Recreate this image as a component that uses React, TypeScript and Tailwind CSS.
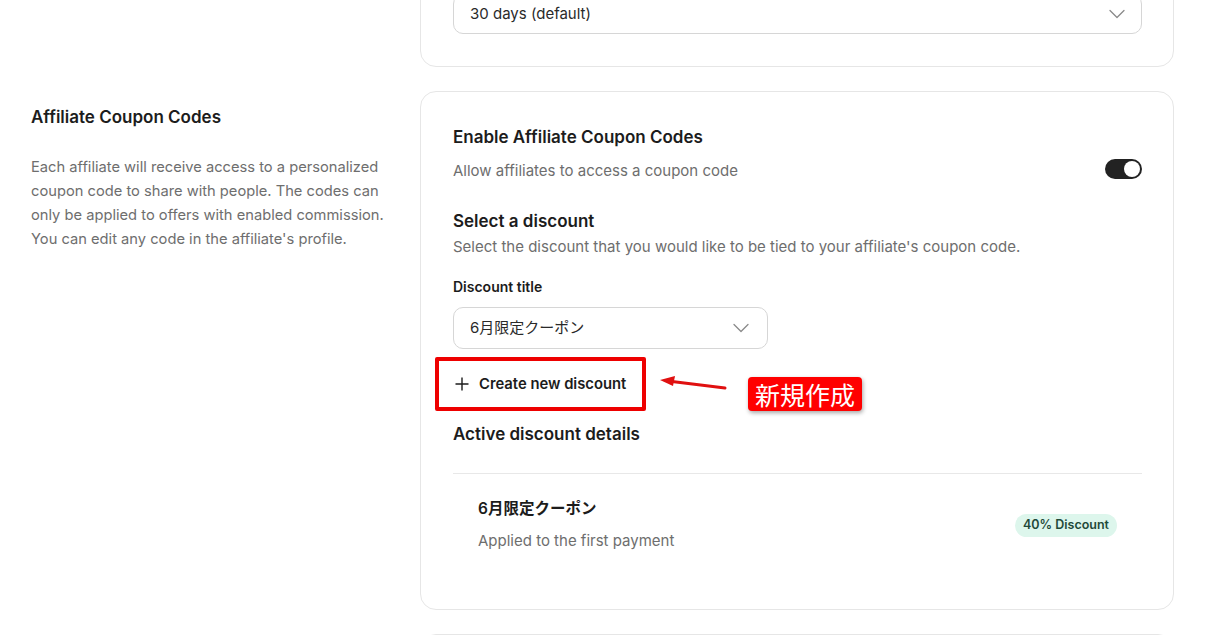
import React from "react";

const font = { fontFamily: 'Inter, "Noto Sans CJK JP", sans-serif' };

function Chevron() {
  return (
    <svg width="16" height="10" viewBox="0 0 16 10" fill="none">
      <path d="M1 1.5 L8 8.5 L15 1.5" stroke="#8a8a8a" strokeWidth="1.3" strokeLinecap="round" strokeLinejoin="round" />
    </svg>
  );
}

export default function App() {
  return (
    <div className="w-[1205px] h-[635px] overflow-hidden bg-white text-[#1c1c1c]" style={font}>
      <div className="flex flex-col px-[31px] mt-[-39px] gap-[24px]">
        {/* Row 1 */}
        <div className="flex">
          <div className="w-[389px] shrink-0" />
          <div className="flex-1 rounded-[16px] border border-[#e6e6e6] pl-[32px] pr-[31px] pt-[32px] pb-[32px]">
            <div className="h-[40px] rounded-[10px] border border-[#d6d6d6] flex items-center justify-between pl-[16px] pr-[16px]">
              <span className="text-[15px] text-[#2a2a2a]">30 days (default)</span>
              <Chevron />
            </div>
          </div>
        </div>

        {/* Row 2 */}
        <div className="flex">
          <div className="w-[389px] shrink-0 pt-[14px] pr-[20px]">
            <div className="text-[17px] leading-[24px] font-semibold text-[#1c1c1c]">Affiliate Coupon Codes</div>
            <p className="mt-[26px] text-[14.7px] leading-[24px] text-[#6e6e6e] w-[365px]">
              Each affiliate will receive access to a personalized coupon code to share with people. The codes can only be applied to offers with enabled commission. You can edit any code in the affiliate's profile.
            </p>
          </div>
          <div className="flex-1 rounded-[16px] border border-[#e6e6e6] pl-[32px] pr-[31px] pt-[33px] pb-[32px]">
            <div className="text-[17px] leading-[24px] font-semibold">Enable Affiliate Coupon Codes</div>
            <div className="mt-[10px] flex items-center justify-between">
              <span className="text-[15px] leading-[24px] text-[#6e6e6e]">Allow affiliates to access a coupon code</span>
              <div className="w-[37px] h-[20px] rounded-full bg-[#222] relative mb-[4px]">
                <div className="absolute right-[2px] top-[2px] w-[16px] h-[16px] rounded-full bg-white" />
              </div>
            </div>

            <div className="mt-[26px] text-[17px] leading-[24px] font-semibold">Select a discount</div>
            <div className="mt-[2px] text-[15px] leading-[24px] text-[#6e6e6e]">
              Select the discount that you would like to be tied to your affiliate's coupon code.
            </div>

            <div className="mt-[18px] text-[14px] leading-[20px] font-semibold">Discount title</div>
            <div className="mt-[10px] w-[315px] h-[42px] rounded-[10px] border border-[#d6d6d6] flex items-center justify-between pl-[16px] pr-[18px]">
              <span className="text-[15px] text-[#2a2a2a]">6月限定クーポン</span>
              <Chevron />
            </div>

            <div className="relative mt-[8px] h-[54px] flex items-center">
              <div className="flex items-center gap-[10px] pl-[2px]">
                <svg width="14" height="14" viewBox="0 0 14 14" fill="none">
                  <path d="M7 0.5 V13.5 M0.5 7 H13.5" stroke="#1c1c1c" strokeWidth="1.4" />
                </svg>
                <span className="text-[14.8px] font-semibold text-[#1c1c1c]">Create new discount</span>
              </div>
              {/* annotation box */}
              <div className="absolute left-[-18px] top-0 w-[211px] h-[54px] border-[4px] border-[#ee0000] rounded-[2px]" />
              {/* arrow */}
              <svg className="absolute left-[205px] top-[18px]" width="70" height="16" viewBox="0 0 70 16" fill="none">
                <path d="M67 13 L14 6.5" stroke="#e01010" strokeWidth="3" strokeLinecap="round" />
                <path d="M2 5 L17 1 L15 11 Z" fill="#e01010" />
              </svg>
              {/* label */}
              <div className="absolute left-[295px] top-[20px] h-[34px] px-[7px] rounded-[4px] bg-[#ff0000] shadow-[1px_2px_4px_rgba(0,0,0,0.35)] flex items-center">
                <span className="text-[25px] leading-[28px] text-white" style={{ fontFamily: '"Noto Sans CJK JP", sans-serif' }}>新規作成</span>
              </div>
            </div>

            <div className="mt-[11px] text-[17px] leading-[24px] font-semibold">Active discount details</div>
            <div className="mt-[27px] border-t border-[#e8e8e8]" />
            <div className="flex items-center justify-between px-[25px] pt-[23px] pb-[24px]">
              <div>
                <div className="text-[15.5px] leading-[24px] font-semibold">6月限定クーポン</div>
                <div className="mt-[8px] text-[15px] leading-[24px] text-[#6e6e6e]">Applied to the first payment</div>
              </div>
              <div className="h-[23px] px-[8px] rounded-full bg-[#ddf6ec] flex items-center">
                <span className="text-[12.5px] font-semibold text-[#1f4a3a]">40% Discount</span>
              </div>
            </div>
          </div>
        </div>

        {/* Row 3 */}
        <div className="flex">
          <div className="w-[389px] shrink-0" />
          <div className="flex-1 h-[120px] rounded-[16px] border border-[#e6e6e6]" />
        </div>
      </div>
    </div>
  );
}
